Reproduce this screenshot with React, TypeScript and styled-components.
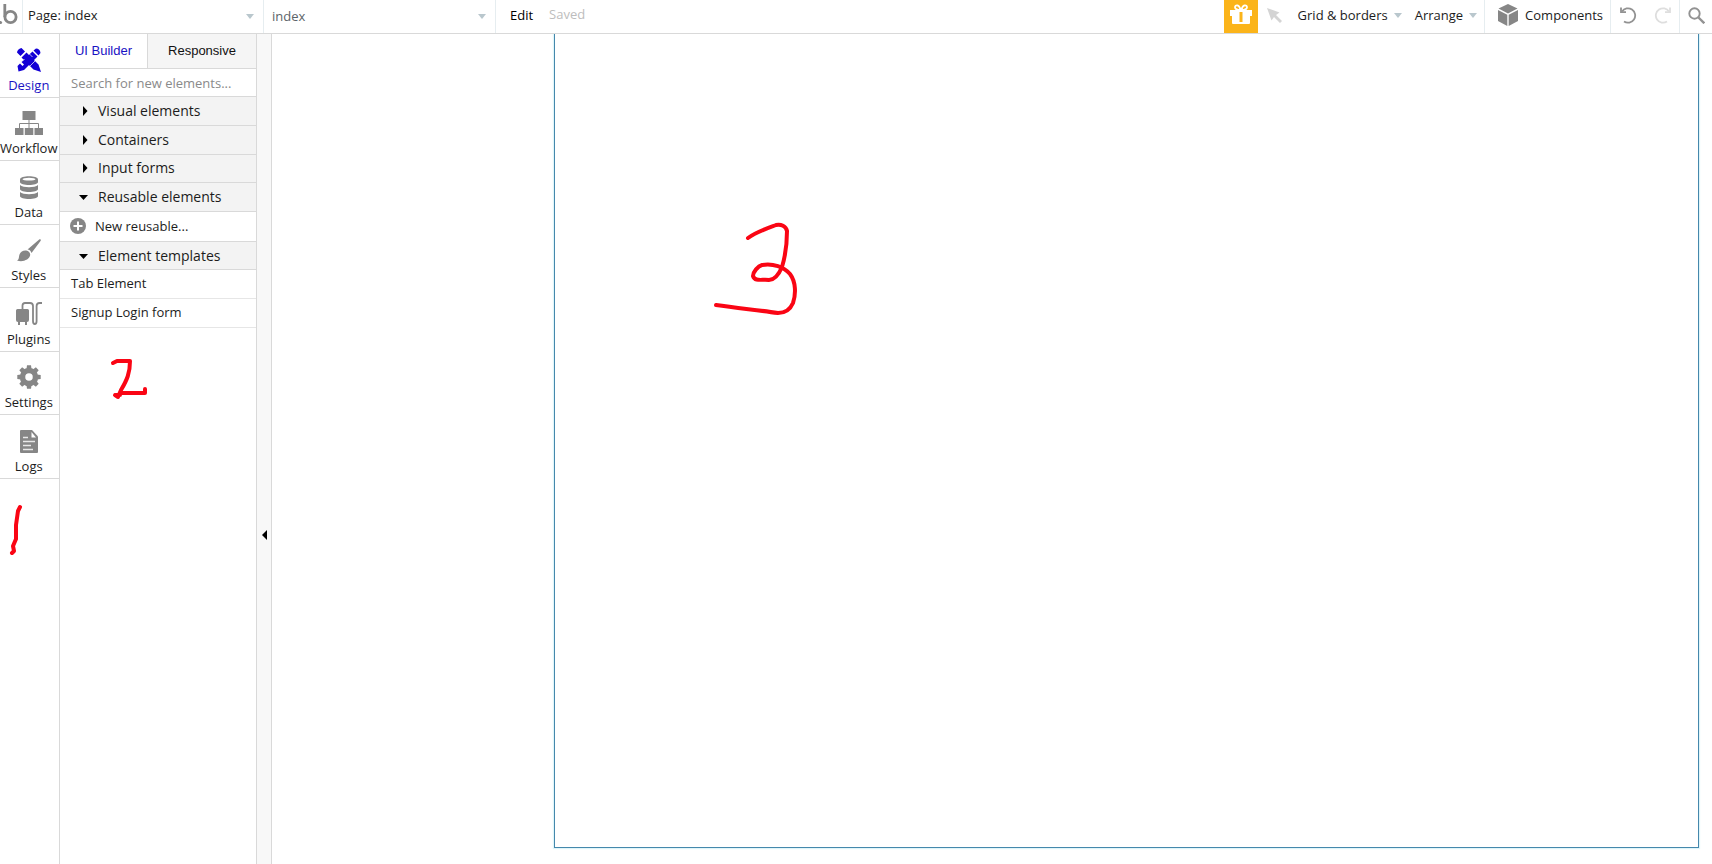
import React from 'react';
import styled, { createGlobalStyle } from 'styled-components';

const line = '#d9d9d9';
const faintLine = '#e6edf0';
const icon = '#868686';
const active = '#1a12c4';

const GlobalStyle = createGlobalStyle`
  * { box-sizing: border-box; }
  body { margin: 0; background: #fff; color: #1c1c1c; font-family: 'Open Sans', 'Noto Sans', sans-serif; font-size: 13px; }
  button, input, select { font: inherit; color: inherit; margin: 0; padding: 0; border: 0; background: none; border-radius: 0; }
  svg { display: block; flex: none; }
`;

const Screen = styled.div`
  position: relative;
  display: flex;
  flex-direction: column;
  min-height: 100vh;
  overflow: hidden;
`;

const TopBar = styled.header`
  display: flex;
  height: 34px;
  border-bottom: 1px solid ${line};
`;

const Logo = styled.a`
  display: flex;
  width: 23px;
  border-right: 1px solid ${faintLine};
`;

const Picker = styled.label<{ $width: number }>`
  display: grid;
  align-items: start;
  width: ${p => p.$width}px;
  border-right: 1px solid ${faintLine};
  > * { grid-area: 1 / 1; }
  > svg { justify-self: end; margin: 14px 9px 0 0; pointer-events: none; }
`;

const PickerSelect = styled.select<{ $muted?: boolean }>`
  appearance: none;
  width: 100%;
  height: ${p => (p.$muted ? 31 : 29)}px;
  padding: 0 24px 0 ${p => (p.$muted ? 8 : 5)}px;
  color: ${p => (p.$muted ? '#5c6468' : '#1c1c1c')};
`;

const EditButton = styled.button`
  padding: 0 16px 0 14px;
  height: 29px;
  color: #000;
`;

const Saved = styled.span`
  line-height: 29px;
  color: #bdbdbd;
`;

const Tools = styled.div`
  display: flex;
  align-items: stretch;
  margin-left: auto;
`;

const GiftButton = styled.button`
  width: 34px;
  padding-bottom: 4px;
  display: grid;
  place-items: center;
  background: #fbb41a;
`;

const IconButton = styled.button<{ $width: number }>`
  display: grid;
  place-items: center;
  width: ${p => p.$width}px;
  padding-bottom: 3px;
`;

const MenuButton = styled.button`
  display: flex;
  align-items: center;
  gap: 6px;
  padding: 0 7px 3px 6px;
`;

const ToolGroup = styled.div`
  display: flex;
  border-left: 1px solid ${faintLine};
`;

const ComponentsButton = styled.button`
  display: flex;
  align-items: center;
  gap: 7px;
  padding: 0 7px 3px 13px;
`;

const Body = styled.div`
  display: flex;
  flex: 1;
`;

const Rail = styled.nav`
  width: 60px;
  border-right: 1px solid ${line};
`;

const RailList = styled.div`
  display: grid;
  grid-template-rows: repeat(7, 1fr);
  height: 445px;
`;

const RailItem = styled.button<{ $active?: boolean }>`
  display: flex;
  flex-direction: column;
  align-items: center;
  justify-content: flex-end;
  gap: 4px;
  padding: 0 2px 3px 0;
  border-bottom: 1px solid ${line};
  line-height: 18px;
  white-space: nowrap;
  color: ${p => (p.$active ? active : '#1c1c1c')};
  > svg { color: ${p => (p.$active ? '#1400d6' : icon)}; }
`;

const Panel = styled.aside`
  width: 197px;
  border-right: 1px solid ${line};
`;

const Tabs = styled.div`
  display: flex;
  height: 35px;
  border-bottom: 1px solid ${line};
`;

const Tab = styled.button<{ $active?: boolean }>`
  flex: ${p => (p.$active ? '0 0 88px' : '1')};
  padding-bottom: 2px;
  font-family: 'Liberation Sans', Arial, sans-serif;
  color: ${p => (p.$active ? active : '#111')};
  background: ${p => (p.$active ? '#fff' : '#f5f5f5')};
  border-right: ${p => (p.$active ? `1px solid ${line}` : '0')};
`;

const Search = styled.input`
  display: block;
  width: 100%;
  height: 28px;
  padding: 0 11px;
  border-bottom: 1px solid ${line};
  &::placeholder { color: #8a8a8a; opacity: 1; }
`;

const SectionGroup = styled.div`
  display: grid;
  grid-template-rows: repeat(4, 1fr);
  height: 115px;
`;

const Section = styled.button`
  display: flex;
  align-items: center;
  width: 100%;
  min-height: 28px;
  padding: 0 19px;
  gap: 9px;
  background: #f3f3f3;
  border-bottom: 1px solid ${line};
  font-size: 14px;
  line-height: 18px;
`;

const Entry = styled.button<{ $lead?: boolean }>`
  display: flex;
  align-items: center;
  gap: 9px;
  width: 100%;
  height: ${p => (p.$lead ? 30 : 29)}px;
  padding: 0 ${p => (p.$lead ? 10 : 11)}px 2px;
  border-bottom: 1px solid ${p => (p.$lead ? line : '#e6e6e6')};
`;

const Collapse = styled.button`
  display: flex;
  align-items: center;
  justify-content: flex-end;
  width: 15px;
  padding: 172px 4px 0 0;
  background: #f8f8f8;
  border-right: 1px solid ${line};
`;

const Workspace = styled.main`
  flex: 1;
  display: flex;
  padding: 0 13px 16px 282px;
  overflow: hidden;
`;

const PageFrame = styled.div`
  flex: 1;
  border: 1px solid #4588ac;
  border-top: 0;
  box-shadow: 0 0 1px 1px #dff5fa;
`;

const Ink = styled.svg`
  position: absolute;
  left: 0;
  top: 0;
  pointer-events: none;
  fill: none;
  stroke: #fa0514;
  stroke-width: 4;
  stroke-linecap: round;
  stroke-linejoin: round;
`;

const Caret = () => (
  <svg width="8" height="5" viewBox="0 0 8 5"><path d="M0 0h8L4 5z" fill="#b9c7cd" /></svg>
);

const Arrow = ({ open }: { open?: boolean }) => (
  <svg width="10" height="10" viewBox="0 0 10 10" fill="#000">
    <path d={open ? 'M0 3h9L4.500 8z' : 'M4 0L8.500 5L4 10z'} />
  </svg>
);

const DesignIcon = () => (
  <svg width="24" height="24" viewBox="0 0 24 24" fill="currentColor">
    <path d="M4.500 0L8 3.500 3.500 8 0 4.500Q0 3 1.500 1.500T4.500 0zM9.500 4.500L21.500 16.500 24 24 16.500 21.500 4.500 9.500z" />
    <path d="M19 .5q4 0 4.500 4.500L21.500 7.500 16.500 2.500zM15.500 3.500l5 5L7 22l-5.500 1.500L.5 18l2.500-2.500 2.500 2.500 1.500-1.500L4.500 14z" />
    <path d="M5 13.500l2.500-2.500M12.500 6l3 3M13 18l5-5" stroke="#fff" strokeWidth=".7" />
  </svg>
);

const WorkflowIcon = () => (
  <svg width="28" height="24" viewBox="0 0 28 24" fill="currentColor">
    <path d="M7.500 0h13v9h-13zM0 17h8.500v7H0zM9.800 17h8.500v7H9.800zM19.500 17H28v7h-8.500z" />
    <path d="M14 9v8M4.500 17v-4.500h19V17" fill="none" stroke="currentColor" />
  </svg>
);

const DataIcon = () => (
  <svg width="18" height="23" viewBox="0 0 18 23" fill="currentColor">
    <path d="M0 3.500C0-.7 18-.7 18 3.500V6c0 4-18 4-18 0z" />
    <ellipse cx="9" cy="3.200" rx="6.500" ry="1.400" fill="#fff" />
    <path d="M0 9c3 3 15 3 18 0v4c0 4-18 4-18 0zM0 16c3 3 15 3 18 0v4c0 4-18 4-18 0z" />
  </svg>
);

const StylesIcon = () => (
  <svg width="24" height="23" viewBox="0 0 24 23" fill="currentColor">
    <path d="M22.500.3c1.200-.6 1.800.6 1 1.600L14.500 14c-.5-2-2-3.300-4-3.500z" />
    <path d="M9.200 11.500c2.600.3 4.200 2.300 4 4.500C12.500 20.500 6 23.500 0 21.500c2.500-1 1.500-3.500 2.600-6.300 1-2.600 3.600-4 6.600-3.700z" />
  </svg>
);

const PluginsIcon = () => (
  <svg width="26" height="24" viewBox="0 0 26 24" fill="currentColor">
    <path d="M0 8.500Q0 7 1.500 7h10Q13 7 13 8.500V18q0 2-2 2v3H9v-3H4v3H2v-3q-2 0-2-2z" />
    <path d="M6.500 7V3.500Q6.500 1 9 1h5q3 0 3 3v15q0 3 1.800 3t1.800-3V4q0-3 3-3H26" fill="none" stroke="currentColor" strokeWidth="1.800" />
  </svg>
);

const SettingsIcon = () => (
  <svg width="24" height="24" viewBox="0 0 24 24">
    <circle cx="12" cy="12" r="6.500" fill="none" stroke="currentColor" strokeWidth="5.500" />
    <g fill="currentColor">
      {[0, 45, 90, 135, 180, 225, 270, 315].map(a => (
        <path key={a} d="M9.500 4L10 .3h4L14.500 4z" transform={`rotate(${a} 12 12)`} />
      ))}
    </g>
  </svg>
);

const LogsIcon = () => (
  <svg width="18" height="23" viewBox="0 0 18 23">
    <path d="M1 0h11l6 6.500V22q0 1-1 1H1q-1 0-1-1V1q0-1 1-1z" fill="currentColor" />
    <path d="M11.500 2v5.500H16z" fill="#fff" />
    <path d="M3 7.500h5M3 11.500h12M3 15.500h8M3 19.500h10" stroke="#e8e8e8" strokeWidth="1.300" />
  </svg>
);

const railItems = [
  { label: 'Design', Icon: DesignIcon },
  { label: 'Workflow', Icon: WorkflowIcon },
  { label: 'Data', Icon: DataIcon },
  { label: 'Styles', Icon: StylesIcon },
  { label: 'Plugins', Icon: PluginsIcon },
  { label: 'Settings', Icon: SettingsIcon },
  { label: 'Logs', Icon: LogsIcon },
];

const RotateIcon = ({ color, flip }: { color: string; flip?: boolean }) => (
  <svg width="17" height="17" viewBox="0 0 17 17" fill="none" stroke={color} strokeWidth="1.800">
    <g transform={flip ? 'translate(17 0) scale(-1 1)' : undefined}>
      <path d="M2 4.500A7.200 7.200 0 1 1 4 14.500" />
      <path d="M1 .5v4.700h5" />
    </g>
  </svg>
);

export default function App() {
  return (
    <Screen>
      <GlobalStyle />
      <TopBar>
        <Logo href="#" aria-label="Home">
          <svg width="18" height="26" viewBox="0 0 18 26" fill="none" stroke={icon} strokeWidth="2.800">
            <circle cx="10.500" cy="17" r="5.600" />
            <path d="M4.800 4v13" />
            <circle cx=".5" cy="22.500" r="1.600" fill={icon} stroke="none" />
          </svg>
        </Logo>
        <Picker $width={241}>
          <PickerSelect aria-label="Page"><option>Page: index</option></PickerSelect>
          <Caret />
        </Picker>
        <Picker $width={232}>
          <PickerSelect aria-label="Element" $muted><option>index</option></PickerSelect>
          <Caret />
        </Picker>
        <EditButton>Edit</EditButton>
        <Saved>Saved</Saved>
        <Tools>
          <GiftButton aria-label="Gift">
            <svg width="24" height="21" viewBox="0 0 24 21" fill="#fff">
              <path d="M1 6h22v6H1zM3 12h18v7q0 1-1 1H4q-1 0-1-1z" />
              <path d="M10.500 8h3v10h-3z" fill="#fbb41a" />
              <path d="M11.500 6C8 6 6 5.500 6 3.300 6 .5 10.500 0 11.500 6zM12.500 6c3.500 0 5.500-.5 5.500-2.700C18 .5 13.500 0 12.500 6z" fill="none" stroke="#fff" strokeWidth="1.800" />
            </svg>
          </GiftButton>
          <IconButton $width={34} aria-label="Select">
            <svg width="15" height="15" viewBox="0 0 15 15" fill="#d4d4d4"><path d="M0 0l12.500 4.500L9 7l6 6-2 2-6-6-2.500 3.500z" /></svg>
          </IconButton>
          <MenuButton>Grid &amp; borders<Caret /></MenuButton>
          <MenuButton>Arrange<Caret /></MenuButton>
          <ToolGroup>
            <ComponentsButton>
              <svg width="20" height="22" viewBox="0 0 20 22" fill={icon}>
                <path d="M10 0l9.500 4.600L10 9.500.5 4.600zM0 6l9.300 4.800V22L0 17zM20 6l-9.300 4.800V22L20 17z" />
              </svg>
              Components
            </ComponentsButton>
          </ToolGroup>
          <ToolGroup>
            <IconButton $width={34} aria-label="Undo"><RotateIcon color="#929292" /></IconButton>
            <IconButton $width={34} aria-label="Redo"><RotateIcon color="#dedede" flip /></IconButton>
          </ToolGroup>
          <ToolGroup>
            <IconButton $width={32} aria-label="Search">
              <svg width="17" height="17" viewBox="0 0 17 17" fill="none" stroke="#929292">
                <circle cx="6.500" cy="6.500" r="5.200" strokeWidth="1.900" />
                <path d="M10.500 10.500l5.800 5.800" strokeWidth="2.400" />
              </svg>
            </IconButton>
          </ToolGroup>
        </Tools>
      </TopBar>
      <Body>
        <Rail>
          <RailList>
            {railItems.map(({ label, Icon }, i) => (
              <RailItem key={label} $active={i === 0}><Icon />{label}</RailItem>
            ))}
          </RailList>
        </Rail>
        <Panel>
          <Tabs>
            <Tab $active>UI Builder</Tab>
            <Tab>Responsive</Tab>
          </Tabs>
          <Search aria-label="Search for new elements" placeholder="Search for new elements..." />
          <SectionGroup>
            <Section><Arrow />Visual elements</Section>
            <Section><Arrow />Containers</Section>
            <Section><Arrow />Input forms</Section>
            <Section><Arrow open />Reusable elements</Section>
          </SectionGroup>
          <Entry $lead>
            <svg width="16" height="16" viewBox="0 0 16 16">
              <circle cx="8" cy="8" r="8" fill={icon} />
              <path d="M8 3.500v9M3.500 8h9" stroke="#fff" strokeWidth="2" />
            </svg>
            New reusable...
          </Entry>
          <Section><Arrow open />Element templates</Section>
          <Entry>Tab Element</Entry>
          <Entry>Signup Login form</Entry>
        </Panel>
        <Collapse aria-label="Collapse panel">
          <svg width="5" height="10" viewBox="0 0 5 10"><path d="M5 0v10L0 5z" /></svg>
        </Collapse>
        <Workspace><PageFrame /></Workspace>
      </Body>
      <Ink width="820" height="570" viewBox="0 0 820 570" aria-hidden="true">
        <path d="M20 507l-2 4-2 14 0 14-3 7 1 5-2 2" />
        <path d="M113 363l4-2h13c0 12-3 19-9 29l-3 7-3-2M116 395h4M121 393h24v-4" />
        <path d="M748 238c8-6 20-10 28-13 5-1 10 1 11 6 0 11-2 26-5 36-3 7-7 13-13 13-7-1-14 2-16-4 0-4 5-10 9-11 11-2 22 2 28 9 6 8 6 20 3 29-3 7-8 10-15 10-21-3-42-5-62-8" />
      </Ink>
    </Screen>
  );
}
